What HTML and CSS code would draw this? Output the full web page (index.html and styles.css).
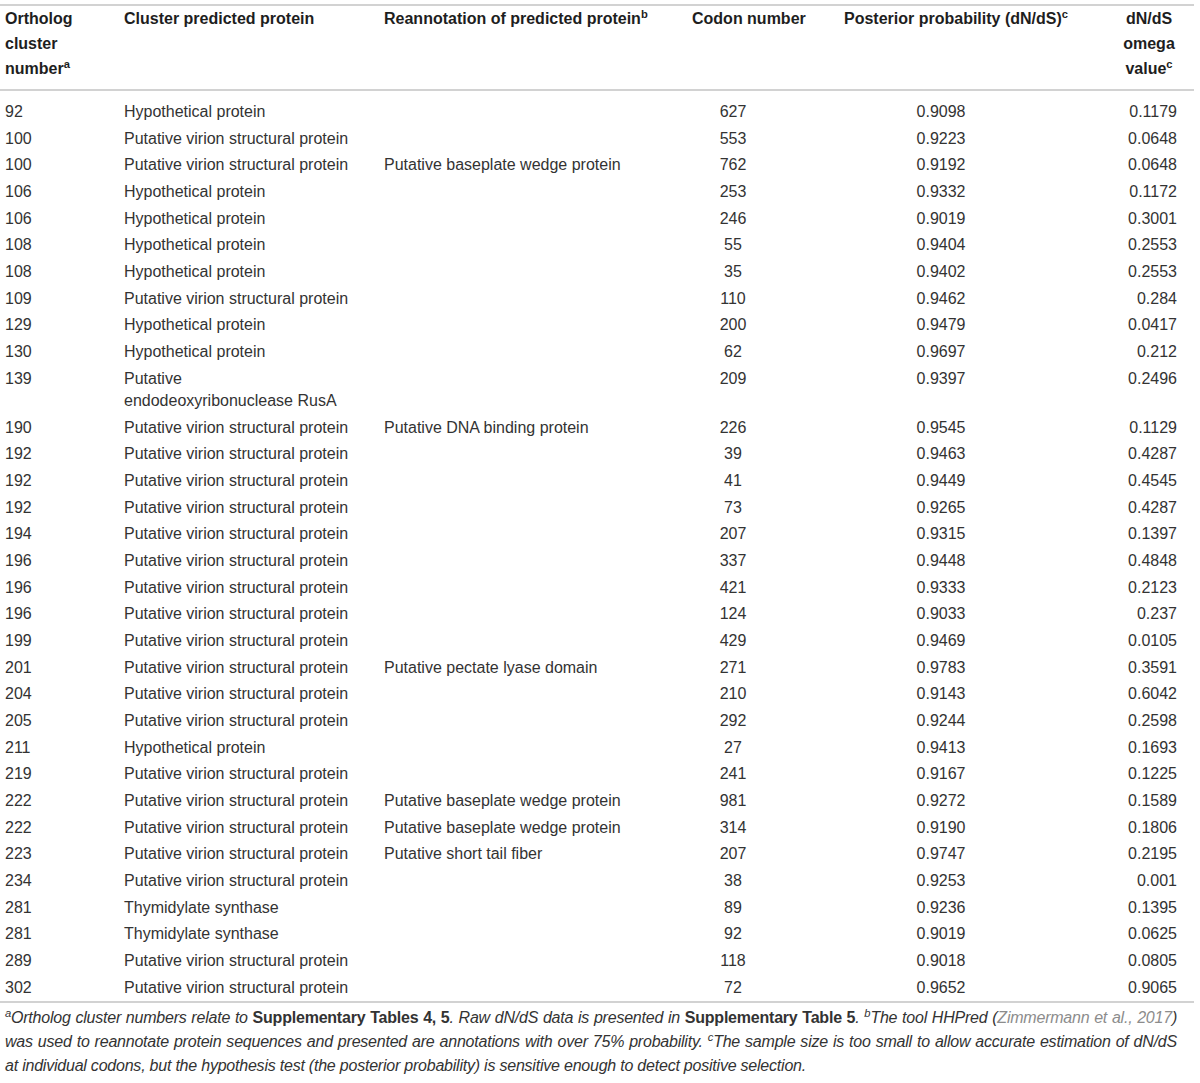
FILE: index.html
```
<!DOCTYPE html>
<html lang="en">
  <head>
    <meta charset="UTF-8" />
    <meta name="viewport" content="width=device-width, initial-scale=1.0" />
    <title>dN/dS selection table</title>
    <link rel="stylesheet" href="styles.css">
  </head>
  <body>
    <div class="table-wrap">
      <table class="data-table">
        <colgroup>
          <col class="c-cluster">
          <col class="c-protein">
          <col class="c-reannot">
          <col class="c-codon">
          <col class="c-post">
          <col class="c-omega">
        </colgroup>
        <thead>
          <tr>
            <th>Ortholog cluster number<sup>a</sup></th>
            <th>Cluster predicted protein</th>
            <th>Reannotation of predicted protein<sup>b</sup></th>
            <th>Codon number</th>
            <th class="nowrap">Posterior probability (dN/dS)<sup>c</sup></th>
            <th class="omega">dN/dS omega value<sup>c</sup></th>
          </tr>
        </thead>
        <tbody>
          <tr><td>92</td><td class="prot">Hypothetical protein</td><td></td><td class="num">627</td><td class="prob">0.9098</td><td class="val">0.1179</td></tr>
          <tr><td>100</td><td class="prot">Putative virion structural protein</td><td></td><td class="num">553</td><td class="prob">0.9223</td><td class="val">0.0648</td></tr>
          <tr><td>100</td><td class="prot">Putative virion structural protein</td><td>Putative baseplate wedge protein</td><td class="num">762</td><td class="prob">0.9192</td><td class="val">0.0648</td></tr>
          <tr><td>106</td><td class="prot">Hypothetical protein</td><td></td><td class="num">253</td><td class="prob">0.9332</td><td class="val">0.1172</td></tr>
          <tr><td>106</td><td class="prot">Hypothetical protein</td><td></td><td class="num">246</td><td class="prob">0.9019</td><td class="val">0.3001</td></tr>
          <tr><td>108</td><td class="prot">Hypothetical protein</td><td></td><td class="num">55</td><td class="prob">0.9404</td><td class="val">0.2553</td></tr>
          <tr><td>108</td><td class="prot">Hypothetical protein</td><td></td><td class="num">35</td><td class="prob">0.9402</td><td class="val">0.2553</td></tr>
          <tr><td>109</td><td class="prot">Putative virion structural protein</td><td></td><td class="num">110</td><td class="prob">0.9462</td><td class="val">0.284</td></tr>
          <tr><td>129</td><td class="prot">Hypothetical protein</td><td></td><td class="num">200</td><td class="prob">0.9479</td><td class="val">0.0417</td></tr>
          <tr><td>130</td><td class="prot">Hypothetical protein</td><td></td><td class="num">62</td><td class="prob">0.9697</td><td class="val">0.212</td></tr>
          <tr><td>139</td><td class="prot">Putative endodeoxyribonuclease RusA</td><td></td><td class="num">209</td><td class="prob">0.9397</td><td class="val">0.2496</td></tr>
          <tr><td>190</td><td class="prot">Putative virion structural protein</td><td>Putative DNA binding protein</td><td class="num">226</td><td class="prob">0.9545</td><td class="val">0.1129</td></tr>
          <tr><td>192</td><td class="prot">Putative virion structural protein</td><td></td><td class="num">39</td><td class="prob">0.9463</td><td class="val">0.4287</td></tr>
          <tr><td>192</td><td class="prot">Putative virion structural protein</td><td></td><td class="num">41</td><td class="prob">0.9449</td><td class="val">0.4545</td></tr>
          <tr><td>192</td><td class="prot">Putative virion structural protein</td><td></td><td class="num">73</td><td class="prob">0.9265</td><td class="val">0.4287</td></tr>
          <tr><td>194</td><td class="prot">Putative virion structural protein</td><td></td><td class="num">207</td><td class="prob">0.9315</td><td class="val">0.1397</td></tr>
          <tr><td>196</td><td class="prot">Putative virion structural protein</td><td></td><td class="num">337</td><td class="prob">0.9448</td><td class="val">0.4848</td></tr>
          <tr><td>196</td><td class="prot">Putative virion structural protein</td><td></td><td class="num">421</td><td class="prob">0.9333</td><td class="val">0.2123</td></tr>
          <tr><td>196</td><td class="prot">Putative virion structural protein</td><td></td><td class="num">124</td><td class="prob">0.9033</td><td class="val">0.237</td></tr>
          <tr><td>199</td><td class="prot">Putative virion structural protein</td><td></td><td class="num">429</td><td class="prob">0.9469</td><td class="val">0.0105</td></tr>
          <tr><td>201</td><td class="prot">Putative virion structural protein</td><td>Putative pectate lyase domain</td><td class="num">271</td><td class="prob">0.9783</td><td class="val">0.3591</td></tr>
          <tr><td>204</td><td class="prot">Putative virion structural protein</td><td></td><td class="num">210</td><td class="prob">0.9143</td><td class="val">0.6042</td></tr>
          <tr><td>205</td><td class="prot">Putative virion structural protein</td><td></td><td class="num">292</td><td class="prob">0.9244</td><td class="val">0.2598</td></tr>
          <tr><td>211</td><td class="prot">Hypothetical protein</td><td></td><td class="num">27</td><td class="prob">0.9413</td><td class="val">0.1693</td></tr>
          <tr><td>219</td><td class="prot">Putative virion structural protein</td><td></td><td class="num">241</td><td class="prob">0.9167</td><td class="val">0.1225</td></tr>
          <tr><td>222</td><td class="prot">Putative virion structural protein</td><td>Putative baseplate wedge protein</td><td class="num">981</td><td class="prob">0.9272</td><td class="val">0.1589</td></tr>
          <tr><td>222</td><td class="prot">Putative virion structural protein</td><td>Putative baseplate wedge protein</td><td class="num">314</td><td class="prob">0.9190</td><td class="val">0.1806</td></tr>
          <tr><td>223</td><td class="prot">Putative virion structural protein</td><td>Putative short tail fiber</td><td class="num">207</td><td class="prob">0.9747</td><td class="val">0.2195</td></tr>
          <tr><td>234</td><td class="prot">Putative virion structural protein</td><td></td><td class="num">38</td><td class="prob">0.9253</td><td class="val">0.001</td></tr>
          <tr><td>281</td><td class="prot">Thymidylate synthase</td><td></td><td class="num">89</td><td class="prob">0.9236</td><td class="val">0.1395</td></tr>
          <tr><td>281</td><td class="prot">Thymidylate synthase</td><td></td><td class="num">92</td><td class="prob">0.9019</td><td class="val">0.0625</td></tr>
          <tr><td>289</td><td class="prot">Putative virion structural protein</td><td></td><td class="num">118</td><td class="prob">0.9018</td><td class="val">0.0805</td></tr>
          <tr><td>302</td><td class="prot">Putative virion structural protein</td><td></td><td class="num">72</td><td class="prob">0.9652</td><td class="val">0.9065</td></tr>
        </tbody>
      </table>

      <p class="notes">
        <sup>a</sup>Ortholog cluster numbers relate to <strong>Supplementary Tables 4, 5</strong>. Raw dN/dS data is presented in <strong>Supplementary Table 5</strong>. <sup>b</sup>The tool HHPred (<a href="#">Zimmermann et al., 2017</a>) was used to reannotate protein sequences and presented are annotations with over 75% probability. <sup>c</sup>The sample size is too small to allow accurate estimation of dN/dS at&nbsp;individual codons, but the hypothesis test (the posterior probability) is sensitive enough to detect positive selection.
      </p>
    </div>
  </body>
</html>
```

FILE: styles.css
```
body {
  margin: 0;
  padding: 0;
  background: #fff;
  font-family: "Liberation Sans", Arial, sans-serif;
  font-size: 16px;
  color: #333;
}
.table-wrap {
  width: 1194px;
  padding-top: 4px;
}
.data-table {
  width: 1194px;
  table-layout: fixed;
  border-collapse: collapse;
  border-top: 2px solid #d2d2d2;
  border-bottom: 2px solid #d2d2d2;
}
.c-cluster { width: 119px; }
.c-protein { width: 260px; }
.c-reannot { width: 308px; }
.c-codon { width: 152px; }
.c-post { width: 275px; }
.c-omega { width: 80px; }

thead tr {
  border-bottom: 2px solid #d2d2d2;
}
th {
  font-weight: bold;
  color: #1e1e1e;
  text-align: left;
  vertical-align: top;
  line-height: 25px;
  padding: 0 5px 8px 5px;
}
th.nowrap {
  white-space: nowrap;
}
th.omega {
  text-align: center;
  padding: 0 17px 8px 7px;
}
td {
  vertical-align: top;
  line-height: 22.3px;
  padding: 2.2px 5px;
}
tbody tr:first-child td {
  padding-top: 10px;
}
td.prot {
  padding-right: 27px;
}
td.num {
  text-align: center;
  padding-left: 0;
  padding-right: 60px;
}
td.prob {
  text-align: center;
  padding-left: 0;
  padding-right: 71px;
}
td.val {
  text-align: right;
  padding-right: 17px;
}
sup {
  font-size: 0.7em;
  line-height: 0;
  vertical-align: 0.5em;
}
.notes {
  margin: 0;
  padding: 3px 17px 0 5px;
  font-style: italic;
  line-height: 24px;
  letter-spacing: -0.22px;
  text-align: justify;
}
.notes strong {
  font-style: normal;
}
.notes a {
  color: #8c8c8c;
  text-decoration: none;
}
```
